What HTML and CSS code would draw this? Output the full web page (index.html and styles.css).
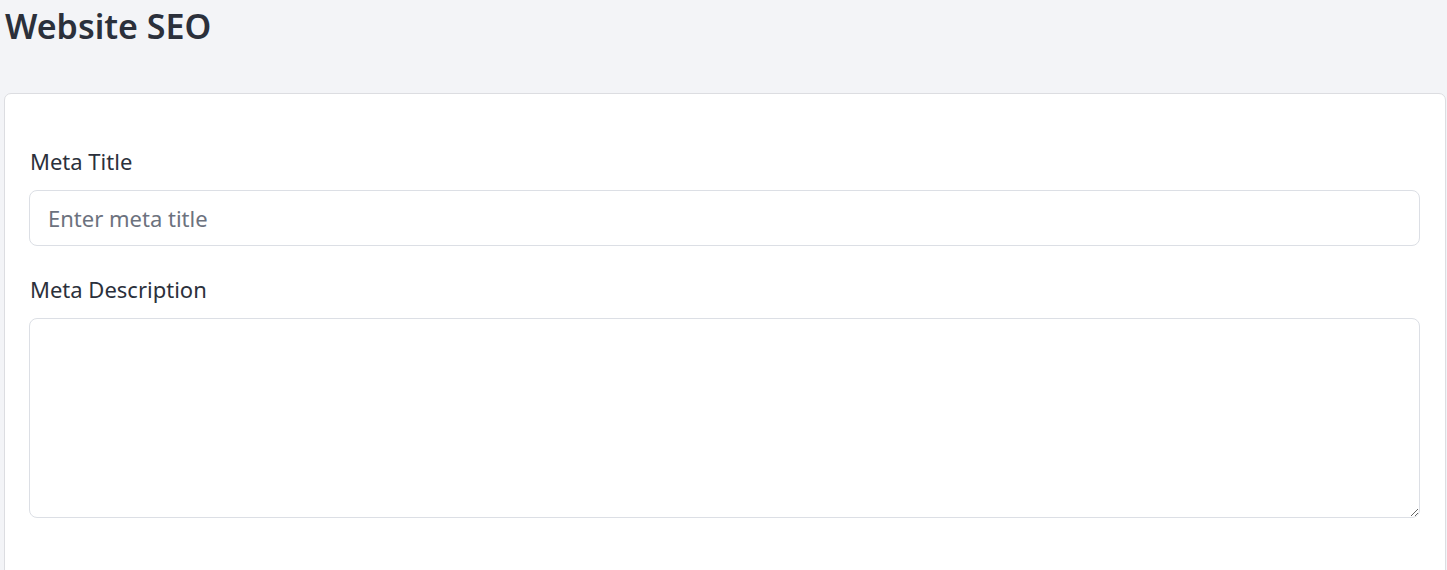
FILE: index.html
```html
<html>
    <head>
        <link rel="stylesheet" href="styles.css">
    </head>
    <body>
        <div class="page">
            <h1 class="page-title">Website SEO</h1>
            <div class="card">
                <form class="seo-form">
                    <div class="field">
                        <label for="metaTitle">Meta Title</label>
                        <input type="text" id="metaTitle" class="control" placeholder="Enter meta title">
                    </div>
                    <div class="field">
                        <label for="metaDescription">Meta Description</label>
                        <textarea id="metaDescription" class="control area"></textarea>
                    </div>
                </form>
            </div>
        </div>
    </body>
</html>
```

FILE: styles.css
```css
body
{
    margin: 0;
    background-color: #f3f4f7;
    font-family: "Noto Sans", "Open Sans", sans-serif;
    color: #2b303b;
}

.page
{
    padding: 0 1px 0 4px;
}

.page-title
{
    margin: 0;
    padding: 2px 0 0 1px;
    height: 91px;
    font-size: 34px;
    font-weight: 600;
    line-height: 48px;
}

.card
{
    background-color: #fff;
    border: 1px solid #dcdde1;
    border-radius: 7px;
    padding: 52px 25px 40px 24px;
    min-height: 600px;
}

.seo-form
{
    display: flex;
    flex-direction: column;
    gap: 28px;
}

.field
{
    display: flex;
    flex-direction: column;
    gap: 14px;
}

.field label
{
    font-size: 22px;
    line-height: 30px;
    padding-left: 1px;
}

.control
{
    font-family: inherit;
    font-size: 22px;
    color: #2b303b;
    border: 1px solid #dcdfe5;
    border-radius: 8px;
    padding: 0 18px;
    height: 56px;
    outline: none;
}

.control::placeholder
{
    color: #6c727e;
}

.area
{
    height: 200px;
    padding: 12px 18px;
    resize: vertical;
}
```
